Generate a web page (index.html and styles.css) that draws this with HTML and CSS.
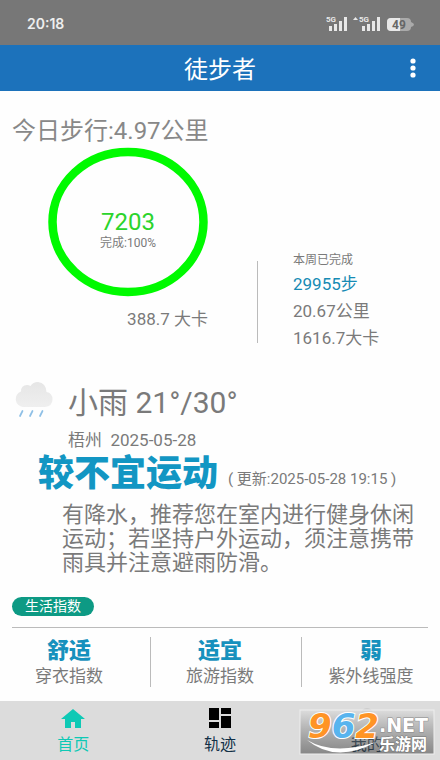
FILE: index.html
```html
<!DOCTYPE html>
<html lang="zh-CN">
<head>
<meta charset="utf-8">
<meta name="viewport" content="width=device-width, initial-scale=1">
<title>徒步者</title>
<link rel="stylesheet" href="styles.css">
</head>
<body>
<div class="status">
  <time class="clock">20:18</time>
  <svg class="signals" width="90" height="18" viewBox="0 0 90 18" aria-hidden="true">
    <g fill="#e8e8e8">
      <path d="M3 11h3v5H3zM8 9h3v7H8zM13 6h3v10h-3zM18 2h3v14h-3z"/>
      <path d="M36 11h3v5h-3zM41 9h3v7h-3zM46 6h3v10h-3zM51 2h3v14h-3z"/>
      <path d="M27 5l2.500-3L32 5z"/>
      <text class="net" x="0" y="7">5G</text>
      <text class="net" x="33" y="7">5G</text>
    </g>
    <path d="M65 3h16a4 4 0 0 1 4 4q3 1 3 2.500T85 12a4 4 0 0 1-4 4H65a4 4 0 0 1-4-4V7a4 4 0 0 1 4-4z" fill="#aaa"/>
    <path d="M65 3h9v13h-9a4 4 0 0 1-4-4V7a4 4 0 0 1 4-4z" fill="#e8e8e8"/>
    <text class="charge" x="66" y="14" fill="#666">49</text>
  </svg>
</div>
<header class="bar">
  <h1>徒步者</h1>
  <button class="more" aria-label="更多">
    <svg width="6" height="20" viewBox="0 0 6 20" fill="#fff"><circle cx="3" cy="3" r="2.600"/><circle cx="3" cy="10" r="2.600"/><circle cx="3" cy="17" r="2.600"/></svg>
  </button>
</header>
<main>
  <h2 class="today">今日步行:4.97公里</h2>
  <section class="summary">
    <div class="day">
      <div class="ring">
        <svg viewBox="0 0 160 150" aria-hidden="true"><ellipse cx="80" cy="75" rx="75.500" ry="70" fill="none" stroke="#00fa00" stroke-width="8.500"/></svg>
        <strong>7203</strong>
        <span>完成:100%</span>
      </div>
      <p class="kcal">388.7 大卡</p>
    </div>
    <div class="week">
      <h3>本周已完成</h3>
      <p class="steps">29955步</p>
      <p>20.67公里</p>
      <p>1616.7大卡</p>
    </div>
  </section>
  <section class="weather">
    <div class="now">
      <svg class="cloud" width="40" height="38" viewBox="0 0 40 38" aria-hidden="true">
        <defs><linearGradient id="c" x1="0" y1="0" x2="0" y2="1"><stop offset="0" stop-color="#e6e6e6"/><stop offset="1" stop-color="#efefef"/></linearGradient></defs>
        <path d="M9 26a8 8 0 0 1-2-15.500Q7 4 13 4q2 0 3.500 1Q19 1 24 1q8 1 8.500 10 6 1 6 7.500T31 26z" fill="url(#c)"/>
        <path d="M8.500 30L6 35M18.500 30L16 35M28.500 30L26 35" stroke="#8fc0e6" stroke-width="1.700" stroke-linecap="round"/>
      </svg>
      <div>
        <p class="temp">小雨 21°/30°</p>
        <p class="place">梧州&nbsp; 2025-05-28</p>
      </div>
    </div>
    <div class="advice"><h2>较不宜运动</h2><span>( 更新:2025-05-28 19:15 )</span></div>
    <p class="detail">有降水，推荐您在室内进行健身休闲运动；若坚持户外运动，须注意携带雨具并注意避雨防滑。</p>
  </section>
  <section class="life">
    <h3>生活指数</h3>
    <hr>
    <ul>
      <li><strong>舒适</strong><span>穿衣指数</span></li>
      <li><strong>适宜</strong><span>旅游指数</span></li>
      <li><strong>弱</strong><span>紫外线强度</span></li>
    </ul>
  </section>
</main>
<nav class="tabs">
  <a class="on" href="#home"><svg width="24" height="24" viewBox="0 0 24 24" fill="currentColor"><path d="M10 22v-6h4v6h6v-9h4L12 3 0 13h4v9z"/></svg>首页</a>
  <a href="#track"><svg width="24" height="24" viewBox="0 0 24 24" fill="#000"><path d="M1 2h10v12H1zM1 16h10v6H1zM13 2h10v6H13zM13 10h10v12H13z"/></svg>轨迹</a>
  <a href="#mine"><svg width="24" height="24" viewBox="0 0 24 24" fill="#ccc"><circle cx="12" cy="8" r="6"/></svg>我的</a>
  <svg class="mark" width="134" height="44" viewBox="0 0 134 44" role="img" aria-label="962.NET 乐游网">
    <defs><linearGradient id="m" x1="0" y1="0" x2="0" y2="1"><stop offset="0" stop-color="#ddd" stop-opacity=".6"/><stop offset="1" stop-color="#333" stop-opacity=".5"/></linearGradient></defs>
    <rect width="134" height="44" fill="url(#m)" stroke="#eee"/>
    <path d="M7 30Q34 46 76 32Q36 54 7 30z" fill="#fff"/>
    <text class="num" x="8" y="28"><tspan fill="#ff9425">9</tspan><tspan fill="#58b4ee">6</tspan><tspan fill="#ff9425">2</tspan></text>
    <text class="net-name" x="79" y="22">.NET</text>
    <text class="site" x="79" y="40">乐游网</text>
  </svg>
</nav>
</body>
</html>
```
FILE: styles.css
```css
* { box-sizing: border-box; margin: 0; padding: 0; }
body {
  min-height: 100vh;
  display: flex;
  flex-direction: column;
  background: #fefefe;
  color: #7a7a7a;
  font-family: Roboto, "Noto Sans CJK SC", sans-serif;
  font-size: 17px;
}
h1, h2, h3 { font-weight: 400; }
.status {
  display: flex;
  justify-content: space-between;
  align-items: center;
  height: 45px;
  padding: 3px 24px 0 27px;
  background: #777;
}
.clock { color: #eee; font: 600 14px/20px Inter, sans-serif; }
.net { font: 700 8px Roboto, sans-serif; }
.charge { font: 700 12px Roboto, sans-serif; }
.bar {
  display: grid;
  grid-template-columns: 1fr auto 1fr;
  align-items: center;
  height: 46px;
  padding: 0 14px;
  background: #1c72bb;
  color: #fff;
}
.bar h1 { grid-column: 2; padding-top: 4px; font-size: 24px; line-height: 36px; }
.more {
  justify-self: end;
  display: flex;
  padding: 6px 10px;
  border: 0;
  background: none;
}
main { padding: 23px 12px 12px; }
.today { color: #888; font-size: 24px; line-height: 34px; }
.summary { display: flex; align-items: flex-end; margin-top: -1px; }
.day { flex: 0 0 245px; padding-left: 36px; }
.ring {
  position: relative;
  width: 160px;
  height: 150px;
  display: flex;
  flex-direction: column;
  align-items: center;
  padding-top: 61px;
}
.ring svg { position: absolute; inset: 0; width: 100%; height: 100%; }
.ring strong { color: #2bd42b; font-weight: 400; font-size: 24px; line-height: 28px; }
.ring span { font-size: 12px; line-height: 14px; }
.kcal { width: 160px; padding-top: 10px; line-height: 24px; text-align: right; }
.week {
  display: flex;
  flex-direction: column;
  justify-content: flex-end;
  padding-left: 35px;
  margin-bottom: -21px;
  border-left: 1px solid #bbb;
  border-image: linear-gradient(transparent 12px, #bbb 12px, #bbb 92px, transparent 92px) 1;
}
.week h3 { font-size: 12px; line-height: 20px; }
.week p { line-height: 27px; }
.week .steps { padding-top: 1px; color: #168bb4; }
.weather { padding-top: 50px; }
.now { display: flex; gap: 14px; padding-left: 2px; }
.cloud { flex: none; }
.temp { font-size: 30px; line-height: 44px; }
.place { font-size: 17px; line-height: 30px; }
.advice { display: flex; align-items: center; gap: 10px; height: 38px; padding-left: 26px; }
.advice h2 { color: #1296c3; font-size: 36px; font-weight: 900; line-height: 38px; }
.advice span { padding-top: 10px; font-size: 15px; line-height: 20px; white-space: nowrap; }
.detail { padding: 10px 12px 0 50px; font-size: 22px; line-height: 24px; }
.life { padding-top: 22px; }
.life h3 {
  width: max-content;
  padding: 0 13px;
  border-radius: 10px;
  background: #0d9a84;
  color: #fff;
  font-size: 14px;
  line-height: 19px;
}
.life hr { margin-top: 11px; border: 0; border-top: 1px solid #bbb; }
.life ul {
  display: grid;
  grid-template-columns: 150fr 151fr 139fr;
  margin: 9px -12px 0;
  list-style: none;
}
.life li { display: flex; flex-direction: column; align-items: center; height: 50px; }
.life li:not(:last-child) { padding-right: 12px; }
.life li + li { border-left: 1px solid #bbb; }
.life strong { color: #1791bd; font-size: 22px; font-weight: 900; line-height: 28px; }
.life span { line-height: 22px; }
.tabs {
  position: relative;
  display: grid;
  grid-template-columns: 1fr 1fr 1fr;
  margin-top: auto;
  padding: 5px 0 3px;
  background: #dcdcdc;
}
.tabs a {
  display: flex;
  flex-direction: column;
  align-items: center;
  gap: 3px;
  color: #123047;
  font-size: 16px;
  line-height: 24px;
  text-decoration: none;
}
.tabs .on { color: #0ec9b5; }
.mark { position: absolute; right: 6px; bottom: 6px; overflow: visible; }
.num { font: italic 700 34px "DejaVu Sans", sans-serif; stroke: #fff; stroke-width: 2px; paint-order: stroke; }
.net-name { fill: #fff; font: 700 19px "DejaVu Sans", sans-serif; stroke: #888; stroke-width: 1px; paint-order: stroke; }
.site { fill: #fff; font: 700 16px "Noto Sans CJK SC", sans-serif; stroke: #777; stroke-width: 1px; paint-order: stroke; }
```
